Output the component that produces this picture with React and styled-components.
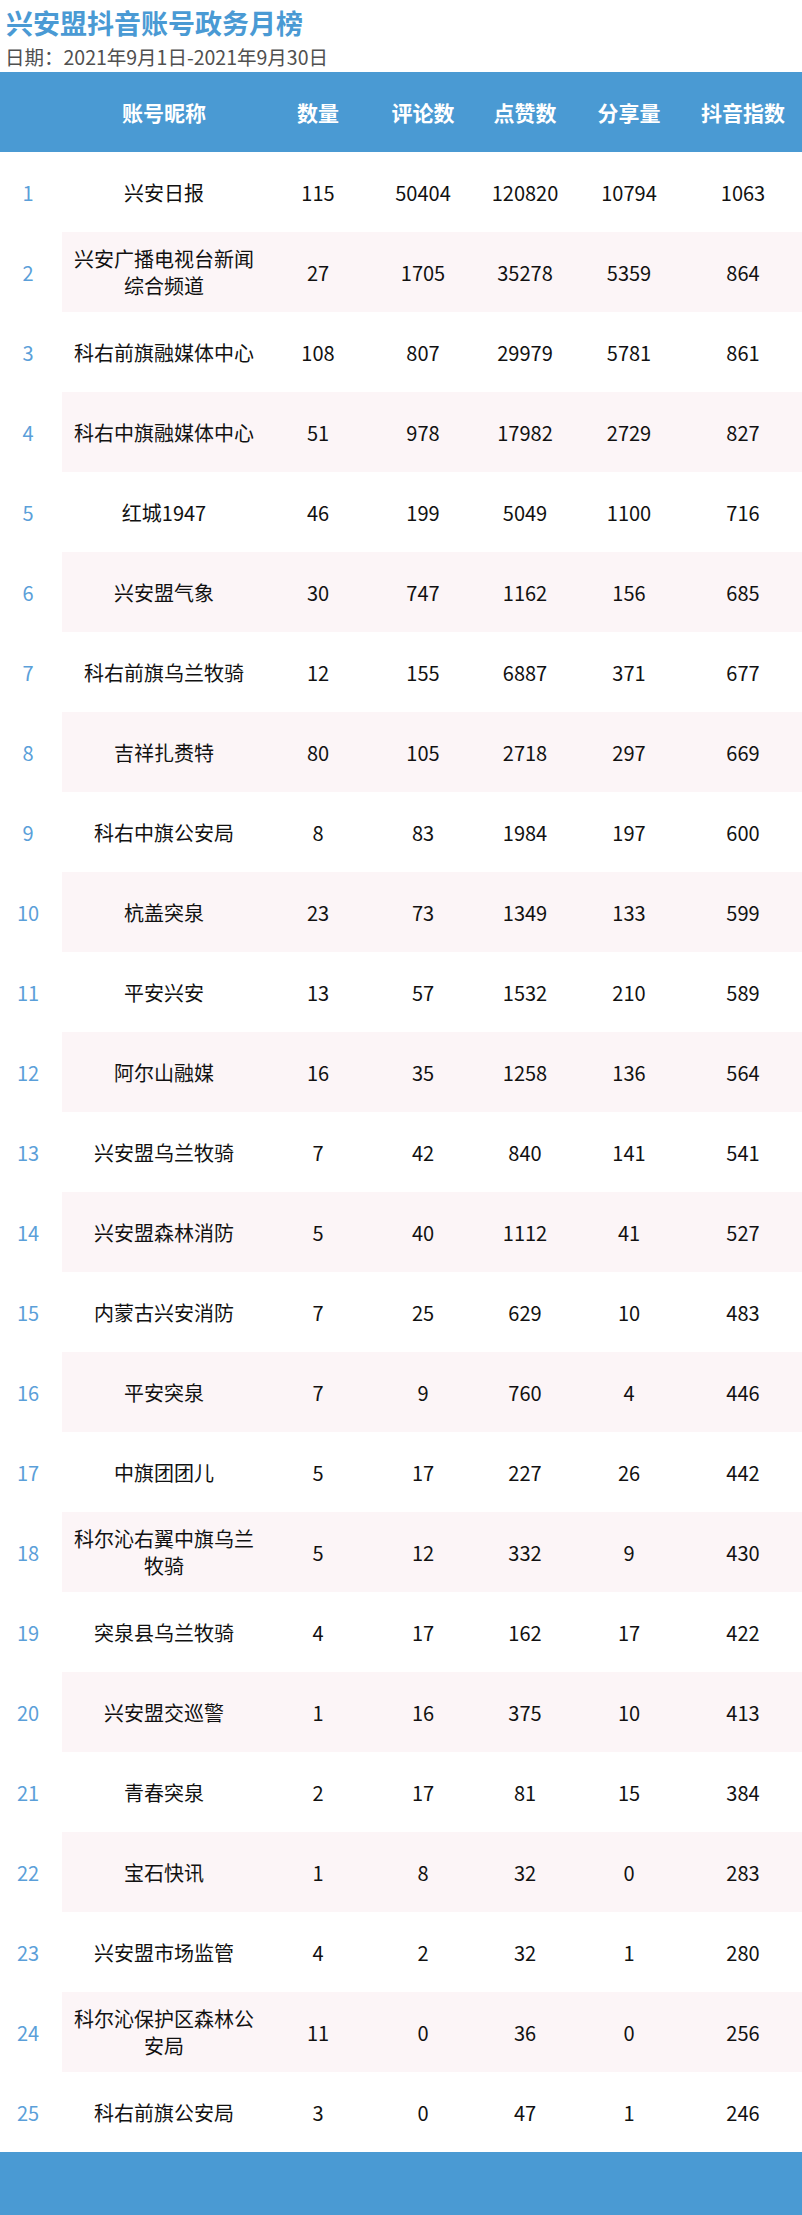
import styled, { createGlobalStyle } from "styled-components";

const GlobalStyle = createGlobalStyle`
  html, body {
    margin: 0;
    padding: 0;
    background: #fff;
  }
  body {
    font-family: "Noto Sans CJK SC", "Noto Sans", sans-serif;
  }
`;

const COLS = "62px 204px 104px 106px 98px 110px 118px";

const rows = [
  ["兴安日报", 115, 50404, 120820, 10794, 1063],
  ["兴安广播电视台新闻综合频道", 27, 1705, 35278, 5359, 864],
  ["科右前旗融媒体中心", 108, 807, 29979, 5781, 861],
  ["科右中旗融媒体中心", 51, 978, 17982, 2729, 827],
  ["红城1947", 46, 199, 5049, 1100, 716],
  ["兴安盟气象", 30, 747, 1162, 156, 685],
  ["科右前旗乌兰牧骑", 12, 155, 6887, 371, 677],
  ["吉祥扎赉特", 80, 105, 2718, 297, 669],
  ["科右中旗公安局", 8, 83, 1984, 197, 600],
  ["杭盖突泉", 23, 73, 1349, 133, 599],
  ["平安兴安", 13, 57, 1532, 210, 589],
  ["阿尔山融媒", 16, 35, 1258, 136, 564],
  ["兴安盟乌兰牧骑", 7, 42, 840, 141, 541],
  ["兴安盟森林消防", 5, 40, 1112, 41, 527],
  ["内蒙古兴安消防", 7, 25, 629, 10, 483],
  ["平安突泉", 7, 9, 760, 4, 446],
  ["中旗团团儿", 5, 17, 227, 26, 442],
  ["科尔沁右翼中旗乌兰牧骑", 5, 12, 332, 9, 430],
  ["突泉县乌兰牧骑", 4, 17, 162, 17, 422],
  ["兴安盟交巡警", 1, 16, 375, 10, 413],
  ["青春突泉", 2, 17, 81, 15, 384],
  ["宝石快讯", 1, 8, 32, 0, 283],
  ["兴安盟市场监管", 4, 2, 32, 1, 280],
  ["科尔沁保护区森林公安局", 11, 0, 36, 0, 256],
  ["科右前旗公安局", 3, 0, 47, 1, 246],
];

const Page = styled.div`
  width: 802px;
`;

const Title = styled.h1`
  margin: 0;
  padding: 4px 0 0 6px;
  font-size: 27px;
  line-height: 38px;
  font-weight: 700;
  color: #4a9ad4;
`;

const DateLine = styled.div`
  padding-left: 5px;
  font-size: 19.5px;
  line-height: 30px;
  color: #505050;
`;

const HeaderRow = styled.div`
  display: grid;
  grid-template-columns: ${COLS};
  height: 80px;
  background: #4a9ad3;
`;

const HeaderCell = styled.div`
  display: flex;
  align-items: center;
  justify-content: center;
  font-size: 21px;
  font-weight: 700;
  color: #fff;
`;

const Row = styled.div`
  display: grid;
  grid-template-columns: ${COLS};
  height: 80px;
`;

const RankCell = styled.div`
  display: flex;
  align-items: center;
  justify-content: center;
  padding-right: 6px;
  font-size: 20px;
  color: #5b9fd9;
`;

const Cell = styled.div`
  display: flex;
  align-items: center;
  justify-content: center;
  text-align: center;
  padding: 0 6px;
  font-size: 20px;
  line-height: 27px;
  color: #111;
  background: ${({ $striped }) => ($striped ? "#fcf5f7" : "transparent")};
`;

const Footer = styled.div`
  height: 63px;
  background: #4a9ad3;
`;

export default function App() {
  return (
    <Page>
      <GlobalStyle />
      <Title>兴安盟抖音账号政务月榜</Title>
      <DateLine>日期：2021年9月1日-2021年9月30日</DateLine>
      <HeaderRow>
        <HeaderCell />
        <HeaderCell>账号昵称</HeaderCell>
        <HeaderCell>数量</HeaderCell>
        <HeaderCell>评论数</HeaderCell>
        <HeaderCell>点赞数</HeaderCell>
        <HeaderCell>分享量</HeaderCell>
        <HeaderCell>抖音指数</HeaderCell>
      </HeaderRow>
      {rows.map((row, i) => (
        <Row key={row[0]}>
          <RankCell>{i + 1}</RankCell>
          {row.map((val, j) => (
            <Cell key={j} $striped={i % 2 === 1}>
              {val}
            </Cell>
          ))}
        </Row>
      ))}
      <Footer />
    </Page>
  );
}
